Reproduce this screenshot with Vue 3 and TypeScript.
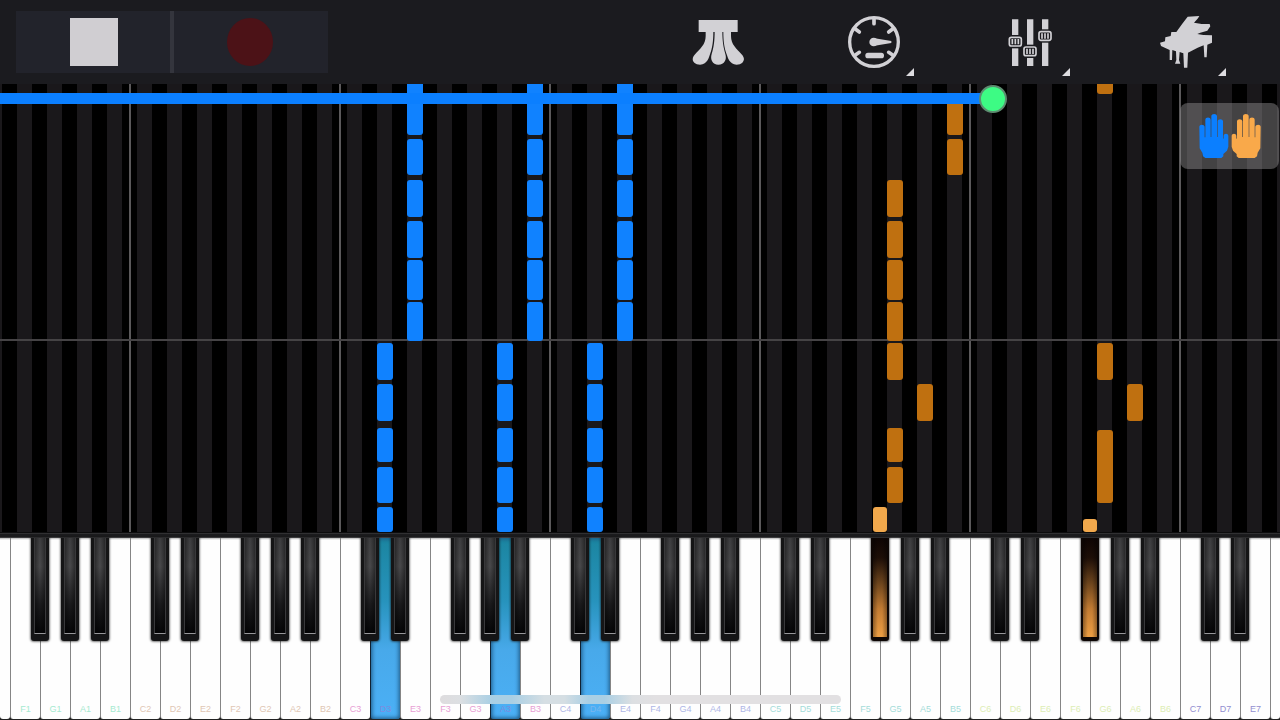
<script setup lang="ts">
import { computed, ref } from 'vue'

type Hue = 'blue' | 'amber' | 'glow'
interface Note { x: number; top: number; bottom: number; hue: Hue }
interface Key { name: string; label: string; octave: number; sharp: boolean }

const STAGE_WIDTH = 1280
const ROLL_TOP = 84
const ROLL_HEIGHT = 448

const progress = ref(782)
const fill = computed(() => ({
  '--fill': `calc(14px + (100% - 28px) * ${progress.value / 1000})`,
}))

const column = (x: number, hue: Hue, spans: number[][]): Note[] =>
  spans.map(([top, bottom]) => ({ x, top, bottom, hue }))

const upper = [[74, 135], [139, 175], [180, 217], [221, 258], [260, 300], [302, 341]]
const lower = [[343, 380], [384, 421], [428, 462], [467, 503], [507, 532]]

const notes: Note[] = [
  ...[415, 535, 625].flatMap((x) => column(x, 'blue', upper)),
  ...[385, 505, 595].flatMap((x) => column(x, 'blue', lower)),
  ...column(955, 'amber', [[98, 135], [139, 175]]),
  ...column(895, 'amber', [[180, 217], [221, 258], [260, 300], [302, 341], [343, 380], [428, 462], [467, 503]]),
  ...column(925, 'amber', [[384, 421]]),
  ...column(1105, 'amber', [[74, 94], [343, 380], [430, 503]]),
  ...column(1135, 'amber', [[384, 421]]),
  ...column(880, 'glow', [[507, 532]]),
  ...column(1090, 'glow', [[519, 532]]),
]

const noteStyle = (n: Note) => ({
  left: `${(n.x / STAGE_WIDTH) * 100}%`,
  top: `${((n.top - ROLL_TOP) / ROLL_HEIGHT) * 100}%`,
  height: `${((n.bottom - n.top) / ROLL_HEIGHT) * 100}%`,
})

const octaveLines = [130, 340, 550, 760, 970, 1180]
const lineStyle = (x: number) => ({ left: `${(x / STAGE_WIDTH) * 100}%` })

const letters = ['C', 'D', 'E', 'F', 'G', 'A', 'B']
const keys: Key[] = []
for (let i = 2; i <= 45; i++) {
  const letter = letters[i % 7]
  const octave = Math.floor(i / 7) + 1
  const name = `${letter}${octave}`
  keys.push({
    name,
    octave,
    label: i === 2 || i === 45 ? '' : name,
    sharp: !'EB'.includes(letter) && i !== 45,
  })
}
const pressedWhite = ['D3', 'A3', 'D4']
const pressedBlack = ['F5', 'F6']
</script>

<template>
  <main class="app">
    <header class="toolbar">
      <button class="transport" aria-label="Stop"><span class="stop"></span></button>
      <button class="transport record" aria-label="Record"><span class="dot"></span></button>
      <button class="tool pedal" aria-label="Pedal">
        <svg viewBox="66 48 156 156">
          <path d="M86 60H203V96H86Z" />
          <path d="M107 94H130C130 122 128 142 119 166C115 180 110 186 104 190C96 196 80 195 73 188C66 181 67 172 74 164C90 146 107 134 107 108Z" />
          <path d="M134 94H157C157 124 160 142 166 162C171 178 164 194 145 194C127 194 120 178 125 162C131 142 134 124 134 94Z" />
          <path d="M183 94H160C160 122 162 142 171 166C175 180 180 186 186 190C194 196 210 195 217 188C224 181 223 172 216 164C200 146 183 134 183 108Z" />
        </svg>
      </button>
      <button class="tool" aria-label="Tempo">
        <svg viewBox="534 48 156 156">
          <circle cx="612" cy="126" r="73" fill="none" stroke="currentColor" stroke-width="10" />
          <path d="M612 56V71M556 87L568 96M668 87L656 96M556 165L568 157M668 165L656 157" fill="none" stroke="currentColor" stroke-width="11" stroke-linecap="round" />
          <circle cx="611" cy="126" r="13" />
          <path d="M614 115L664 123V129L614 137Z" />
          <rect x="586" y="158" width="56" height="17" rx="8" />
        </svg>
        <i class="corner"></i>
      </button>
      <button class="tool" aria-label="Mixer">
        <svg viewBox="132 48 156 156">
          <path d="M156 58H175V198H156ZM201 58H220V198H201ZM246 58H265V198H246Z" />
          <g v-for="[x, y] in [[166, 125], [210, 154], [255, 108]]" :key="x" :transform="`translate(${x} ${y})`">
            <rect class="gap" x="-22" y="-20" width="44" height="40" />
            <rect class="gap" x="-18" y="-13" width="36" height="26" rx="6" stroke="currentColor" stroke-width="5" />
            <path d="M-9 -8V8M0 -8V8M9 -8V8" stroke="currentColor" stroke-width="5" />
          </g>
        </svg>
        <i class="corner"></i>
      </button>
      <button class="tool" aria-label="Instrument">
        <svg viewBox="600 48 156 156">
          <path d="M683 50L718 48L714 55L702 68L725 72L749 72L751 79L742 92L721 98L712 102L730 105L757 106V128L742 134L740 172H733L731 136L713 143L684 158L682 203H672L670 160L659 156L657 180L661 191H645L649 180L648 154L637 150L636 180H629L629 150L603 138L600 128L615 124L616 112L632 108L634 96L649 96L668 70Z" />
        </svg>
        <i class="corner"></i>
      </button>
    </header>

    <section class="roll" aria-label="Falling notes">
      <span v-for="x in octaveLines" :key="x" class="octave" :style="lineStyle(x)"></span>
      <span class="measure"></span>
      <span v-for="(n, i) in notes" :key="i" class="note" :class="n.hue" :style="noteStyle(n)"></span>
      <input v-model.number="progress" class="seek" type="range" min="0" max="1000" aria-label="Song position" :style="fill" />
      <button class="hands" aria-label="Hands">
        <svg viewBox="714 339 192 138">
          <defs>
            <path id="hand" d="M718 380C718 372 733 372 734 380V412H736V359C736 350 752 350 752 359V411H754V349C754 340 771 340 771 349V411H773V364C773 356 789 356 789 364V414L791 418V408C791 399 805 399 805 408V440L801 452L790 462V469L784 474H736L729 469L727 458L719 445Z" />
          </defs>
          <use href="#hand" fill="#0b7fff" />
          <use href="#hand" fill="#f9a94a" transform="translate(1620 0) scale(-1 1)" />
        </svg>
      </button>
    </section>

    <div class="rail"></div>

    <section class="keyboard" aria-label="Keyboard">
      <div v-for="k in keys" :key="k.name" class="key">
        <button class="white" :class="[`o${k.octave}`, { pressed: pressedWhite.includes(k.name) }]" :aria-label="k.name">{{ k.label }}</button>
        <button v-if="k.sharp && k.label" class="black" :class="{ pressed: pressedBlack.includes(k.name) }" :aria-label="`${k.name} sharp`"></button>
      </div>
      <span class="home"></span>
    </section>
  </main>
</template>

<style>
body {
  background: #000;
}
</style>

<style scoped>
.app {
  display: flex;
  flex-direction: column;
  min-height: 100vh;
  overflow: hidden;
  font-family: "Liberation Sans", Arial, sans-serif;
}
button {
  padding: 0;
  border: 0;
  background: none;
  font: inherit;
}
.toolbar {
  display: grid;
  grid-template-columns: repeat(8, 1fr);
  height: 84px;
  padding: 0 16px;
  background: #1b1b1f;
}
.transport {
  display: grid;
  place-items: center;
  margin: 11px 0;
  background: #22232b;
}
.record {
  box-shadow: -2px 0 0 #34353d, inset 2px 0 0 #34353d;
}
.stop {
  width: 48px;
  height: 48px;
  background: #d0ced2;
}
.dot {
  width: 46px;
  height: 48px;
  border-radius: 50%;
  background: #4c1217;
}
.tool {
  position: relative;
  display: grid;
  place-items: center;
  color: #d2d1d5;
}
.pedal {
  grid-column: 5;
}
.tool svg {
  width: 52px;
  height: 52px;
  fill: currentColor;
}
.tool .gap {
  fill: #1b1b1f;
}
.corner {
  position: absolute;
  left: calc(50% + 32px);
  bottom: 8px;
  border-bottom: 8px solid #dddce0;
  border-left: 8px solid transparent;
}
.roll {
  --u: calc(100% / 512);
  position: relative;
  flex: 1;
  min-height: 448px;
  overflow: hidden;
  background: repeating-linear-gradient(
    90deg,
    #1a181b 0,
    #1a181b calc(var(--u) * 1),
    #000 calc(var(--u) * 1),
    #000 calc(var(--u) * 7),
    #1a181b calc(var(--u) * 7),
    #1a181b calc(var(--u) * 12)
  );
}
.octave {
  position: absolute;
  top: 0;
  bottom: 0;
  width: 2px;
  margin-left: -1px;
  background: #5b595b;
}
.measure {
  position: absolute;
  left: 0;
  right: 0;
  top: 57%;
  height: 2px;
  background: #454345;
}
.note {
  position: absolute;
  width: 16px;
  margin-left: -8px;
  border-radius: 3px;
}
.blue {
  background: #1082ff;
}
.amber {
  background: #bf7010;
}
.glow {
  width: 14px;
  margin-left: -7px;
  background: #f1a84c;
}
.seek {
  position: absolute;
  left: 0;
  top: 0;
  width: 100%;
  height: 30px;
  margin: 0;
  appearance: none;
  background: linear-gradient(#0b7fff, #0b7fff) 0 9px / var(--fill) 11px no-repeat;
}
.seek::-webkit-slider-thumb {
  appearance: none;
  width: 28px;
  height: 28px;
  border: 2px solid #5d8c70;
  border-radius: 50%;
  background: #3dfb84;
}
.hands {
  position: absolute;
  top: 19px;
  right: 1px;
  display: grid;
  place-items: center;
  width: 99px;
  height: 66px;
  border-radius: 8px;
  background: rgba(146, 144, 146, 0.46);
}
.hands svg {
  width: 64px;
  height: 46px;
}
.rail {
  height: 6px;
  background: linear-gradient(#0c0c0d 0 1px, #303032 1px 2px, #1b1b1d 2px 5px, #3c3c3e 5px);
}
.keyboard {
  position: relative;
  display: grid;
  grid-template-columns: 1fr repeat(42, 3fr) 1fr;
  height: 182px;
  background: #222;
}
.key {
  position: relative;
  min-width: 0;
}
.white {
  display: flex;
  align-items: flex-end;
  justify-content: center;
  width: 100%;
  height: 181px;
  padding-bottom: 4px;
  border-left: 1px solid #858585;
  border-radius: 0 0 3px 3px;
  background: linear-gradient(#b8b8b8, #fefefe 2px);
  font-size: 9px;
  line-height: 12px;
}
.key:first-child .white {
  border-left: 0;
}
.o1 { color: #a5ead0; }
.o2 { color: #e0c6b4; }
.o3 { color: #e8a0d4; }
.o4 { color: #aeb6e6; }
.o5 { color: #a4dcd9; }
.o6 { color: #dcedb4; }
.o7 { color: #938ed0; }
.white.pressed {
  border-left-color: #123;
  background: linear-gradient(#1b85a0, #2793bd 35%, #48a9ea 62%, #4bb0f6);
  box-shadow: inset 0 0 4px 1px #1c5580;
}
.o3.pressed { color: #7d8ce0; }
.o4.pressed { color: #79b6ee; }
.black {
  position: absolute;
  z-index: 1;
  top: 0;
  right: -9px;
  width: 18px;
  height: 103px;
  border-radius: 0 0 3px 3px;
  background: #151516;
  box-shadow: 0 0 2px 1px rgba(20, 20, 20, 0.55);
}
.black::before {
  content: "";
  position: absolute;
  inset: 0 3px 7px;
  border: 1px solid #39393b;
  border-top: 0;
  border-bottom-color: #98989a;
  background:
    linear-gradient(90deg, rgba(0, 0, 0, 0.4), transparent 50%, rgba(0, 0, 0, 0.4)),
    linear-gradient(#404042, #4a4a4c 30%, #1b1b1d 70%, #050506);
}
.black.pressed {
  background: #0d0604;
}
.black.pressed::before {
  inset: 0 2px 4px;
  border: 0;
  background:
    linear-gradient(90deg, rgba(0, 0, 0, 0.35), transparent 35%, transparent 65%, rgba(0, 0, 0, 0.35)),
    linear-gradient(#0d0403, #1d0e07 20%, #6b431c 45%, #c37c33 72%, #ee9f43);
}
.home {
  position: absolute;
  z-index: 2;
  left: 50%;
  bottom: 16px;
  width: 401px;
  height: 9px;
  margin-left: -200px;
  border-radius: 5px;
  background: linear-gradient(90deg, #dedcde, #dcdfe2 5%, #a9cfe4 13%, #a9cfe4 18%, #d5dee3 26%, #d5dee3 31%, #a9cfe4 37%, #a9cfe4 41%, #dcdfe2 48%, #e2e0e2 54%);
}
</style>
